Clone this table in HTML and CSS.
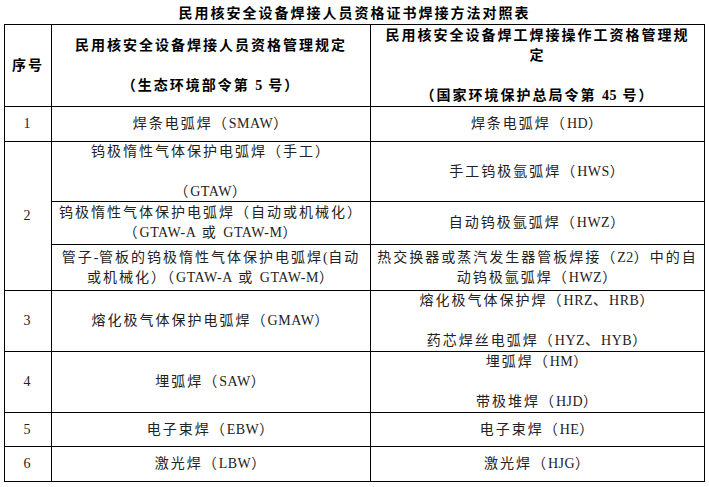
FILE: index.html
```html
<!DOCTYPE html>
<html lang="zh-CN">
<head>
<meta charset="utf-8">
<title>民用核安全设备焊接人员资格证书焊接方法对照表</title>
<link rel="stylesheet" href="styles.css">
</head>
<body>
<div class="title">民用核安全设备焊接人员资格证书焊接方法对照表</div>
<div class="grid">
  <div class="cell head"><p>序号</p></div>
  <div class="cell head"><p>民用核安全设备焊接人员资格管理规定<br><br>（生态环境部令第 <span class="en">5</span> 号）</p></div>
  <div class="cell head"><p>民用核安全设备焊工焊接操作工资格管理规<br>定<br><br>（国家环境保护总局令第 <span class="en">45</span> 号）</p></div>

  <div class="cell"><p>1</p></div>
  <div class="cell"><p>焊条电弧焊（<span class="en">SMAW</span>）</p></div>
  <div class="cell"><p>焊条电弧焊（<span class="en">HD</span>）</p></div>

  <div class="cell no2"><p>2</p></div>
  <div class="cell"><p>钨极惰性气体保护电弧焊（手工）<br><br>（<span class="en">GTAW</span>）</p></div>
  <div class="cell"><p>手工钨极氩弧焊（<span class="en">HWS</span>）</p></div>
  <div class="cell"><p>钨极惰性气体保护电弧焊（自动或机械化）<br>（<span class="en">GTAW-A</span> 或 <span class="en">GTAW-M</span>）</p></div>
  <div class="cell"><p>自动钨极氩弧焊（<span class="en">HWZ</span>）</p></div>
  <div class="cell"><p>管子<span class="en">-</span>管板的钨极惰性气体保护电弧焊<span class="en">(</span>自动<br>或机械化）（<span class="en">GTAW-A</span> 或 <span class="en">GTAW-M</span>）</p></div>
  <div class="cell"><p>热交换器或蒸汽发生器管板焊接（<span class="en">Z2</span>）中的自<br>动钨极氩弧焊（<span class="en">HWZ</span>）</p></div>

  <div class="cell"><p>3</p></div>
  <div class="cell"><p>熔化极气体保护电弧焊（<span class="en">GMAW</span>）</p></div>
  <div class="cell"><p>熔化极气体保护焊（<span class="en">HRZ</span>、<span class="en">HRB</span>）<br><br>药芯焊丝电弧焊（<span class="en">HYZ</span>、<span class="en">HYB</span>）</p></div>

  <div class="cell"><p>4</p></div>
  <div class="cell"><p>埋弧焊（<span class="en">SAW</span>）</p></div>
  <div class="cell"><p>埋弧焊（<span class="en">HM</span>）<br><br>带极堆焊（<span class="en">HJD</span>）</p></div>

  <div class="cell"><p>5</p></div>
  <div class="cell"><p>电子束焊（<span class="en">EBW</span>）</p></div>
  <div class="cell"><p>电子束焊（<span class="en">HE</span>）</p></div>

  <div class="cell"><p>6</p></div>
  <div class="cell"><p>激光焊（<span class="en">LBW</span>）</p></div>
  <div class="cell"><p>激光焊（<span class="en">HJG</span>）</p></div>
</div>
</body>
</html>
```

FILE: styles.css
```css
html, body {
  margin: 0;
  padding: 0;
  background: #ffffff;
}
body {
  font-family: "Liberation Serif", "Noto Sans CJK SC", serif;
  font-size: 14px;
  color: #222222;
  letter-spacing: 2px;
  width: 709px;
  height: 487px;
  overflow: hidden;
}
.title {
  height: 24px;
  box-sizing: border-box;
  padding-top: 4px;
  line-height: 20px;
  text-align: center;
  font-weight: bold;
  color: #000;
}
.grid {
  margin-left: 4px;
  width: 701px;
  box-sizing: border-box;
  border-top: 1px solid #000;
  border-left: 1px solid #000;
  display: grid;
  grid-template-columns: 47px 319px 334px;
  grid-template-rows: 82px 35px 60px 43px 46px 61px 61px 34px 35px;
}
.cell {
  box-sizing: border-box;
  border-right: 1px solid #000;
  border-bottom: 1px solid #000;
  display: flex;
  flex-direction: column;
  justify-content: center;
  align-items: center;
  padding: 0 2px;
}
.cell p {
  margin: 0;
  text-align: center;
  line-height: 20px;
  white-space: nowrap;
}
.en {
  font-size: 14px;
  letter-spacing: 0.5px;
}
.head {
  font-weight: bold;
  color: #000;
}
.no2 {
  grid-row: span 3;
}
```
